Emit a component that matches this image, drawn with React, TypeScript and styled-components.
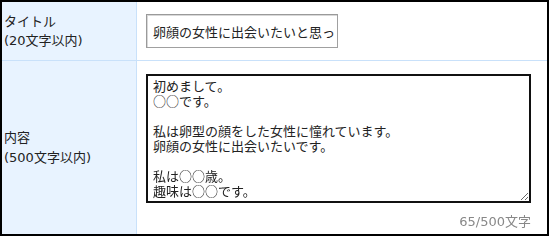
import React, { useEffect, useRef } from "react";
import styled, { createGlobalStyle } from "styled-components";

const GlobalStyle = createGlobalStyle`
  body {
    margin: 0;
    background: #fff;
    font-family: "DejaVu Sans", "Noto Sans CJK JP", sans-serif;
  }
`;

const Table = styled.div`
  width: 549px;
  height: 236px;
  box-sizing: border-box;
  border: 2px solid #000;
  display: grid;
  grid-template-rows: 59px 1fr;
`;

const Row = styled.div<{ $last?: boolean }>`
  display: grid;
  grid-template-columns: 135px 1fr;
  border-bottom: ${(p) => (p.$last ? "none" : "1px solid #c9e1fa")};
`;

const Label = styled.div<{ $gap?: number }>`
  background: #e8f3ff;
  border-right: 1px solid #c9e1fa;
  display: flex;
  flex-direction: column;
  justify-content: center;
  gap: ${(p) => p.$gap || 0}px;
  padding: 0 0 0 2px;
  font-size: 13px;
  line-height: 19px;
  color: #222;
`;

const Cell = styled.div`
  display: flex;
  flex-direction: column;
  padding: 0 0 0 9px;
`;

const TitleCell = styled(Cell)`
  justify-content: center;
`;

const TitleInput = styled.input`
  width: 192px;
  height: 34px;
  box-sizing: border-box;
  border: 1px solid #a0a0a0;
  border-top-color: #9a9a9a;
  border-left-color: #9a9a9a;
  box-shadow: inset 1px 1px 0 #d8d8d8;
  padding: 0 2px 0 6px;
  font-family: "Noto Sans CJK JP", sans-serif;
  font-size: 13px;
  color: #222;
  outline: none;
`;

const BodyCell = styled(Cell)`
  padding-top: 13px;
`;

const BodyArea = styled.textarea`
  width: 385px;
  height: 129px;
  box-sizing: border-box;
  border: 2px solid #111;
  padding: 2px 5px;
  font-family: "Noto Sans CJK JP", sans-serif;
  font-size: 13px;
  line-height: 15px;
  color: #222;
  outline: none;
  resize: both;
`;

const Counter = styled.div`
  width: 385px;
  text-align: right;
  margin-top: 8px;
  font-size: 13px;
  color: #888;
`;

const body =
  "初めまして。\n○○です。\n\n私は卵型の顔をした女性に憧れています。\n卵顔の女性に出会いたいです。\n\n私は○○歳。\n趣味は○○です。";

export default function App() {
  const ref = useRef<HTMLTextAreaElement>(null);

  useEffect(() => {
    const el = ref.current;
    if (!el) return;
    const pos = body.indexOf("\n\n私は○○") + 1;
    el.focus();
    el.setSelectionRange(pos, pos);
  }, []);

  return (
    <>
      <GlobalStyle />
      <Table>
        <Row>
          <Label>
            <span>タイトル</span>
            <span>(20文字以内)</span>
          </Label>
          <TitleCell>
            <TitleInput defaultValue="卵顔の女性に出会いたいと思っています" readOnly />
          </TitleCell>
        </Row>
        <Row $last>
          <Label $gap={1}>
            <span>内容</span>
            <span>(500文字以内)</span>
          </Label>
          <BodyCell>
            <BodyArea ref={ref} defaultValue={body} />
            <Counter>65/500文字</Counter>
          </BodyCell>
        </Row>
      </Table>
    </>
  );
}
